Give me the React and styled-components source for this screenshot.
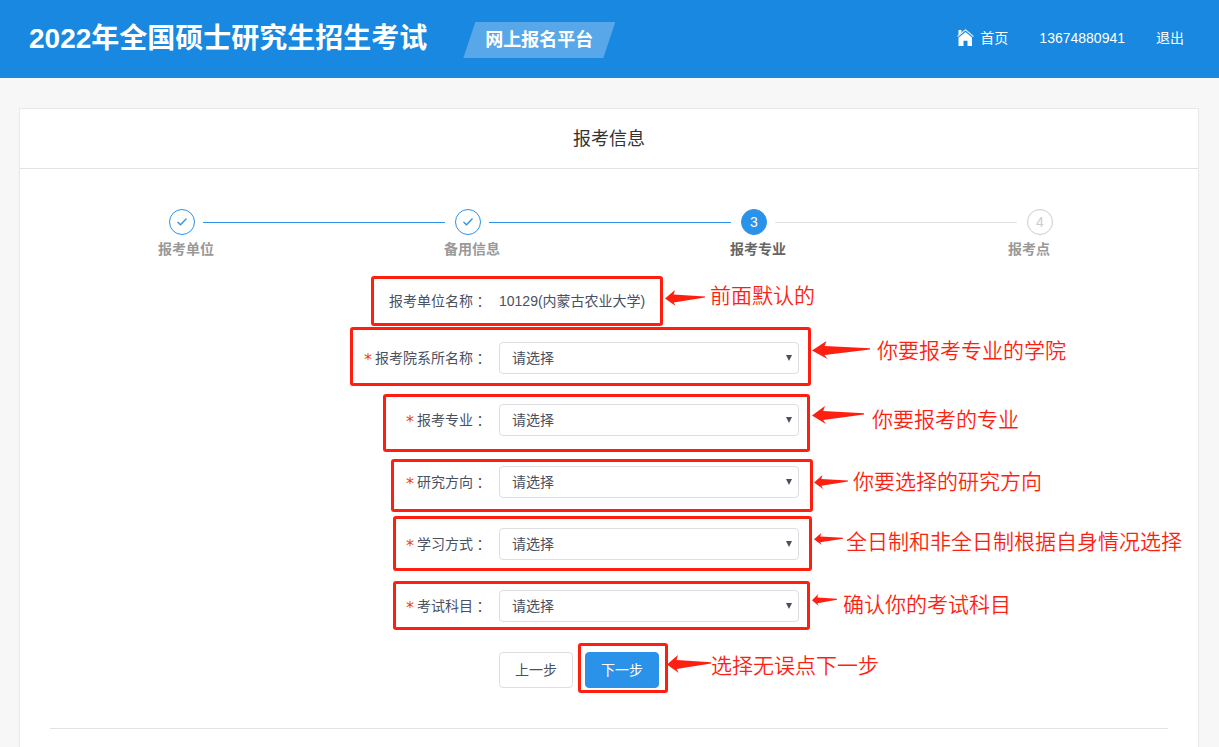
/**
*
* Registration info page
*
*/

import React from 'react';

import styled, { createGlobalStyle, css } from 'styled-components';

const RED = '#ff1f11';
const BLUE = '#2b92ea';

const GlobalStyle = createGlobalStyle`
  * {
    box-sizing: border-box;
  }

  body {
    margin: 0;
    background: #f7f7f7;
    color: #495060;
    font: 14px/20px "Liberation Sans", "Noto Sans CJK SC", sans-serif;
  }
`;

const Page = styled.div`
  display: flex;
  flex-direction: column;
  min-height: 100vh;
`;

const Header = styled.header`
  display: flex;
  align-items: center;
  height: 78px;
  padding: 0 35px 0 29px;
  background: #1988e1;
  color: #fff;
`;

const SiteTitle = styled.h1`
  margin: 0;
  font-size: 28px;
  line-height: 36px;
  white-space: nowrap;
`;

const Platform = styled.span`
  margin: 2px auto 0 36px;
  padding: 0 22px;
  background: #58a8e9;
  clip-path: polygon(12px 0, 100% 0, calc(100% - 12px) 100%, 0 100%);
  font-size: 18px;
  font-weight: bold;
  line-height: 36px;
  white-space: nowrap;
`;

const Nav = styled.nav`
  display: flex;
  gap: 31px;
  padding-bottom: 2px;
`;

const NavLink = styled.a`
  display: flex;
  align-items: center;
  gap: 6px;
  color: #fff;
  text-decoration: none;
`;

const Card = styled.main`
  flex: 1;
  margin: 30px 20px 0 19px;
  border: 1px solid #e8e8e8;
  border-bottom: 0;
  background: #fff;
`;

const CardTitle = styled.h2`
  margin: 0;
  padding-top: 1px;
  border-bottom: 1px solid #e3e3e3;
  color: #333;
  font-size: 18px;
  font-weight: normal;
  line-height: 58px;
  text-align: center;
`;

const Steps = styled.ol`
  display: flex;
  margin: 40px 145px 0 149px;
  padding: 0;
  list-style: none;
`;

const Step = styled.li`
  flex: 1;

  &:last-child {
    flex: none;
    width: 26px;
  }
`;

const StepHead = styled.div`
  display: flex;
  align-items: center;
  gap: 8px;
`;

const StepCircle = styled.span`
  display: flex;
  flex: none;
  align-items: center;
  justify-content: center;
  width: 26px;
  height: 26px;
  border: 1px solid ${BLUE};
  border-radius: 50%;
  color: ${BLUE};

  ${props => props.$status === 'process' && css`
    background: ${BLUE};
    color: #fff;
  `}

  ${props => props.$status === 'wait' && css`
    border-color: #ccc;
    color: #ccc;
  `}
`;

const StepLine = styled.span`
  flex: 1;
  height: 1px;
  margin-right: 10px;
  background: ${props => (props.$done ? BLUE : '#e3e3e3')};
`;

const StepTitle = styled.div`
  display: flex;
  justify-content: ${props => (props.$last ? 'flex-end' : 'flex-start')};
  margin: 4px ${props => (props.$last ? 3 : 0)}px 0 -11px;
  color: ${props => (props.$active ? '#666' : '#999')};
  font-weight: bold;
  white-space: nowrap;
`;

const Form = styled.form`
  position: relative;
  margin-top: 21px;
`;

const Row = styled.div`
  display: grid;
  grid-template-columns: 467px 300px;
  column-gap: 12px;
  align-items: center;
  min-height: ${props => (props.$static ? 42 : 32)}px;
  margin-bottom: ${props => (props.$static ? 20 : 30)}px;
`;

const Label = styled.label`
  display: flex;
  align-items: center;
  justify-content: flex-end;
`;

const Required = styled.span`
  margin-right: 3px;
  color: #ed3f14;
  font-family: "DejaVu Sans", sans-serif;
  font-size: 16px;
  line-height: 14px;
  padding-top: 4px;
`;

const Colon = styled.span`
  font-family: "Noto Sans CJK TC", sans-serif;
`;

const SelectBox = styled.div`
  position: relative;

  /* dropdown caret */
  &::after {
    content: '';
    position: absolute;
    top: 13px;
    right: 7px;
    border: solid transparent;
    border-width: 6px 3px 0;
    border-top-color: #495060;
    pointer-events: none;
  }
`;

const Select = styled.select`
  display: block;
  width: 100%;
  height: 32px;
  padding: 0 12px;
  border: 1px solid #dddee1;
  border-radius: 4px;
  appearance: none;
  background: #fff;
  color: inherit;
  font: inherit;
`;

const Actions = styled.div`
  display: flex;
  gap: 12px;
  margin-left: 479px;
`;

const Button = styled.button`
  width: 74px;
  height: 36px;
  padding: 0;
  border: 1px solid ${props => (props.$primary ? BLUE : '#dddee1')};
  border-radius: 4px;
  background: ${props => (props.$primary ? BLUE : '#fff')};
  color: ${props => (props.$primary ? '#fff' : 'inherit')};
  font: inherit;
`;

const Divider = styled.hr`
  height: 1px;
  margin: 40px 30px 0;
  border: 0;
  background: #e3e3e3;
`;

/* red hand-made marks that lie over the form */
const Frame = styled.div`
  position: absolute;
  left: ${props => props.$box[0]}px;
  top: ${props => props.$box[1]}px;
  width: ${props => props.$box[2]}px;
  height: ${props => props.$box[3]}px;
  border: 3px solid ${RED};
  border-radius: 3px;
  pointer-events: none;
`;

const ArrowSvg = styled.svg`
  position: absolute;
  left: ${props => props.$box[0]}px;
  top: ${props => props.$box[1]}px;
  width: ${props => props.$box[2]}px;
  height: ${props => props.$box[3]}px;
  fill: ${RED};
`;

const Note = styled.span`
  position: absolute;
  left: ${props => props.$at[0]}px;
  top: ${props => props.$at[1]}px;
  color: ${RED};
  font-size: 21px;
  font-weight: 350;
  line-height: 30px;
  white-space: nowrap;
`;

const steps = [
  { title: '报考单位', status: 'finish' },
  { title: '备用信息', status: 'finish' },
  { title: '报考专业', status: 'process' },
  { title: '报考点', status: 'wait' },
];

const fields = [
  { id: 'department', label: '报考院系所名称' },
  { id: 'major', label: '报考专业' },
  { id: 'direction', label: '研究方向' },
  { id: 'mode', label: '学习方式' },
  { id: 'subject', label: '考试科目' },
];

// boxes are [left, top, width, height] inside the form
const marks = [
  { text: '前面默认的', frame: [351, -4, 292, 50], arrow: [645, 10, 40, 16], note: [690, 1] },
  { text: '你要报考专业的学院', frame: [330, 47, 461, 59], arrow: [792, 61, 58, 18], note: [857, 56] },
  { text: '你要报考的专业', frame: [363, 114, 427, 58], arrow: [792, 126, 52, 18], note: [852, 125] },
  { text: '你要选择的研究方向', frame: [371, 179, 422, 53], arrow: [794, 195, 34, 14], note: [833, 187] },
  { text: '全日制和非全日制根据自身情况选择', frame: [373, 236, 419, 55], arrow: [794, 253, 29, 12], note: [826, 247] },
  { text: '确认你的考试科目', frame: [373, 301, 417, 49], arrow: [792, 314, 25, 12], note: [823, 310] },
  { text: '选择无误点下一步', frame: [558, 363, 90, 50], arrow: [647, 375, 44, 18], note: [691, 371] },
];

function HomeIcon() {
  return (
    <svg width="17" height="18" viewBox="0 0 17 18" aria-hidden="true">
      <path d="M1.5 1h3v3l-3 3z" fill="#fff" />
      <path d="M0.5 7.5L8.5 0.8L16.5 7.5" fill="none" stroke="#d5eafb" strokeWidth="1.2" />
      <path d="M8.5 3L15 8.5V17H10.5V11.8H6.5V17H1.5V8.8z" fill="#fff" />
    </svg>
  );
}

function CheckIcon() {
  return (
    <svg width="12" height="10" viewBox="0 0 12 10" aria-hidden="true">
      <path d="M1.5 5L4.5 7.8L10.5 1.5" fill="none" stroke={BLUE} strokeWidth="1.3" />
    </svg>
  );
}

function Arrow({ box }) {
  return (
    <ArrowSvg $box={box} viewBox="0 0 58 17" preserveAspectRatio="none" aria-hidden="true">
      <path d="M0 9L14.5 0L12.5 4.8L58 6.8L58 8L12.5 13.2L15.5 17z" />
    </ArrowSvg>
  );
}

function SelectField({ id, label }) {
  return (
    <Row>
      <Label htmlFor={id}>
        <Required>*</Required>
        {label}
        <Colon>：</Colon>
      </Label>
      <SelectBox>
        <Select id={id}>
          <option>请选择</option>
        </Select>
      </SelectBox>
    </Row>
  );
}

function App() {
  return (
    <Page>
      <GlobalStyle />
      <Header>
        <SiteTitle>2022年全国硕士研究生招生考试</SiteTitle>
        <Platform>网上报名平台</Platform>
        <Nav>
          <NavLink href="#home">
            <HomeIcon />
            首页
          </NavLink>
          <NavLink href="#account">13674880941</NavLink>
          <NavLink href="#logout">退出</NavLink>
        </Nav>
      </Header>
      <Card>
        <CardTitle>报考信息</CardTitle>
        <Steps>
          {steps.map((step, i) => (
            <Step key={step.title}>
              <StepHead>
                <StepCircle $status={step.status}>
                  {step.status === 'finish' ? <CheckIcon /> : i + 1}
                </StepCircle>
                {i < steps.length - 1 && <StepLine $done={step.status === 'finish'} />}
              </StepHead>
              <StepTitle $active={step.status === 'process'} $last={i === steps.length - 1}>
                {step.title}
              </StepTitle>
            </Step>
          ))}
        </Steps>
        <Form onSubmit={e => e.preventDefault()}>
          <Row $static>
            <Label as="span">
              报考单位名称
              <Colon>：</Colon>
            </Label>
            <span>10129(内蒙古农业大学)</span>
          </Row>
          {fields.map(field => <SelectField key={field.id} {...field} />)}
          <Actions>
            <Button type="button">上一步</Button>
            <Button type="submit" $primary>下一步</Button>
          </Actions>
          {marks.map(mark => (
            <React.Fragment key={mark.text}>
              <Frame $box={mark.frame} />
              <Arrow box={mark.arrow} />
              <Note $at={mark.note}>{mark.text}</Note>
            </React.Fragment>
          ))}
        </Form>
        <Divider />
      </Card>
    </Page>
  );
}

export default App;
